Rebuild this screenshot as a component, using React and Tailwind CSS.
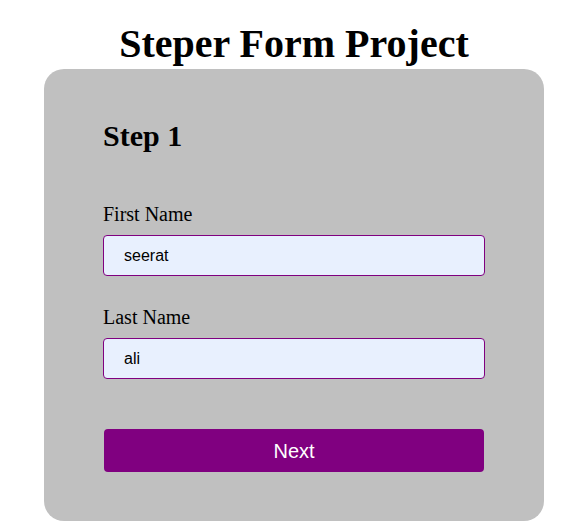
import { useState } from 'react';

function App() {
  const [firstName, setFirstName] = useState('seerat');
  const [lastName, setLastName] = useState('ali');

  return (
    <div className="min-h-[530px] bg-white pl-[44px] pt-[21px]" style={{ fontFamily: '"Liberation Serif", serif' }}>
      <div className="w-[500px]">
        <h1 className="text-center text-[40px] font-bold leading-[46px] text-black">Steper Form Project</h1>
        <div className="mt-[2px] flex flex-col rounded-[20px] bg-[#c0c0c0] px-[59px] pt-[50px] pb-[49px]">
          <h2 className="text-[30px] font-bold leading-[34px] text-black">Step 1</h2>

          <label className="mt-[50px] text-[20px] leading-[23px] text-black">First Name</label>
          <input
            value={firstName}
            onChange={(e) => setFirstName(e.target.value)}
            className="mt-[9px] h-[41px] w-[382px] rounded-[4px] border border-[#800080] bg-[#e8f0fe] pl-5 text-[16px] text-black outline-none"
            style={{ fontFamily: '"Liberation Sans", Arial, sans-serif' }}
          />

          <label className="mt-[30px] text-[20px] leading-[23px] text-black">Last Name</label>
          <input
            value={lastName}
            onChange={(e) => setLastName(e.target.value)}
            className="mt-[9px] h-[41px] w-[382px] rounded-[4px] border border-[#800080] bg-[#e8f0fe] pl-5 text-[16px] text-black outline-none"
            style={{ fontFamily: '"Liberation Sans", Arial, sans-serif' }}
          />

          <button
            className="mt-[50px] ml-[1px] h-[43px] w-[380px] rounded-[4px] bg-[#800080] text-[20px] text-white"
            style={{ fontFamily: '"Liberation Sans", Arial, sans-serif' }}
          >
            Next
          </button>
        </div>
      </div>
    </div>
  );
}

export default App;
